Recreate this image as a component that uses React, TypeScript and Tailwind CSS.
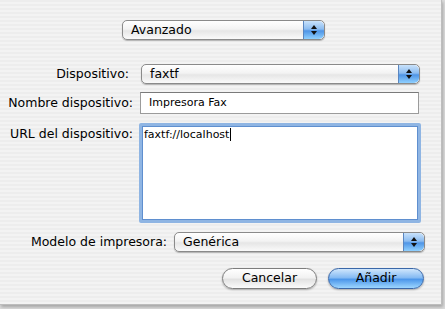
import React from 'react';

const font = "font-['DejaVu_Sans',sans-serif]";

function Stepper() {
  return (
    <div className="flex h-full w-[21px] flex-col items-center justify-center gap-[2px] rounded-r-[5px] border-l border-[#5a86c0] bg-[linear-gradient(to_bottom,#c9e2fb_0%,#8cbcf0_45%,#4f95e6_55%,#8fd0ff_100%)]">
      <svg width="6" height="4" viewBox="0 0 6 4">
        <path d="M3 0 L6 4 L0 4 Z" fill="#111" />
      </svg>
      <svg width="6" height="4" viewBox="0 0 6 4">
        <path d="M0 0 L6 0 L3 4 Z" fill="#111" />
      </svg>
    </div>
  );
}

function Popup({ value, className }: { value: string; className: string }) {
  return (
    <div
      className={`flex h-[20px] items-stretch overflow-hidden rounded-[5px] border border-[#8a8a8a] bg-[linear-gradient(to_bottom,#ffffff_0%,#f3f3f3_45%,#e6e6e6_55%,#fafafa_100%)] shadow-[0_1px_1px_rgba(0,0,0,0.25)] ${className}`}
    >
      <span className="flex-1 pl-[8px] text-[12.5px] leading-[18px] text-black">{value}</span>
      <Stepper />
    </div>
  );
}

export default function App() {
  return (
    <div className={`h-[309px] w-[445px] bg-[#dcdcdc] ${font}`}>
      <div className="relative flex h-[305px] w-[442px] flex-col border-r border-b border-[#bdbdbd] bg-[repeating-linear-gradient(to_bottom,#ededed_0px,#ededed_2px,#f3f3f3_2px,#f3f3f3_4px)] shadow-[1px_2px_3px_rgba(0,0,0,0.25)]">
        <div className="flex pt-[20px] pl-[122px]">
          <Popup value="Avanzado" className="w-[203px]" />
        </div>

        <div className="mt-[24px] flex items-center">
          <span className="w-[131px] pr-[2px] text-right text-[12.5px] text-black">Dispositivo:</span>
          <Popup value="faxtf" className="ml-[10px] w-[279px]" />
        </div>

        <div className="mt-[8px] flex items-center">
          <span className="w-[133px] text-right text-[12.5px] text-black">Nombre dispositivo:</span>
          <div className="ml-[7px] flex h-[22px] w-[279px] items-center border border-[#9b9b9b] border-t-[#7a7a7a] bg-white pl-[8px] text-[11px] text-black">
            Impresora Fax
          </div>
        </div>

        <div className="mt-[9px] flex items-start">
          <span className="w-[133px] pt-[2px] text-right text-[12.5px] text-black">URL del dispositivo:</span>
          <div className="ml-[6px] h-[100px] w-[282px] rounded-[2px] border-[3px] border-[#8fb5e3] bg-white p-0 shadow-[inset_0_0_0_1px_#5f8fcf]">
            <div className="flex items-center pl-[2px] pt-[1px] text-[11px] leading-[15px] text-black">
              faxtf://localhost
              <span className="ml-[1px] inline-block h-[13px] w-[1px] bg-black" />
            </div>
          </div>
        </div>

        <div className="mt-[9px] flex items-center">
          <span className="w-[167px] text-right text-[12.5px] text-black">Modelo de impresora:</span>
          <Popup value="Genérica" className="ml-[7px] w-[251px]" />
        </div>

        <div className="mt-[16px] flex items-center gap-[11px] pl-[222px]">
          <button className="flex h-[21px] w-[95px] items-center justify-center rounded-full border border-[#7d7d7d] bg-[linear-gradient(to_bottom,#ffffff_0%,#f2f2f2_45%,#e2e2e2_55%,#fbfbfb_100%)] text-[12.5px] text-black shadow-[0_1px_2px_rgba(0,0,0,0.3)]">
            Cancelar
          </button>
          <button className="flex h-[21px] w-[96px] items-center justify-center rounded-full border border-[#3a67a8] bg-[linear-gradient(to_bottom,#cfe6fc_0%,#86bbf3_45%,#4d97ea_55%,#9dd6ff_100%)] text-[12.5px] text-black shadow-[0_1px_2px_rgba(0,0,0,0.3)]">
            Añadir
          </button>
        </div>
      </div>
    </div>
  );
}
